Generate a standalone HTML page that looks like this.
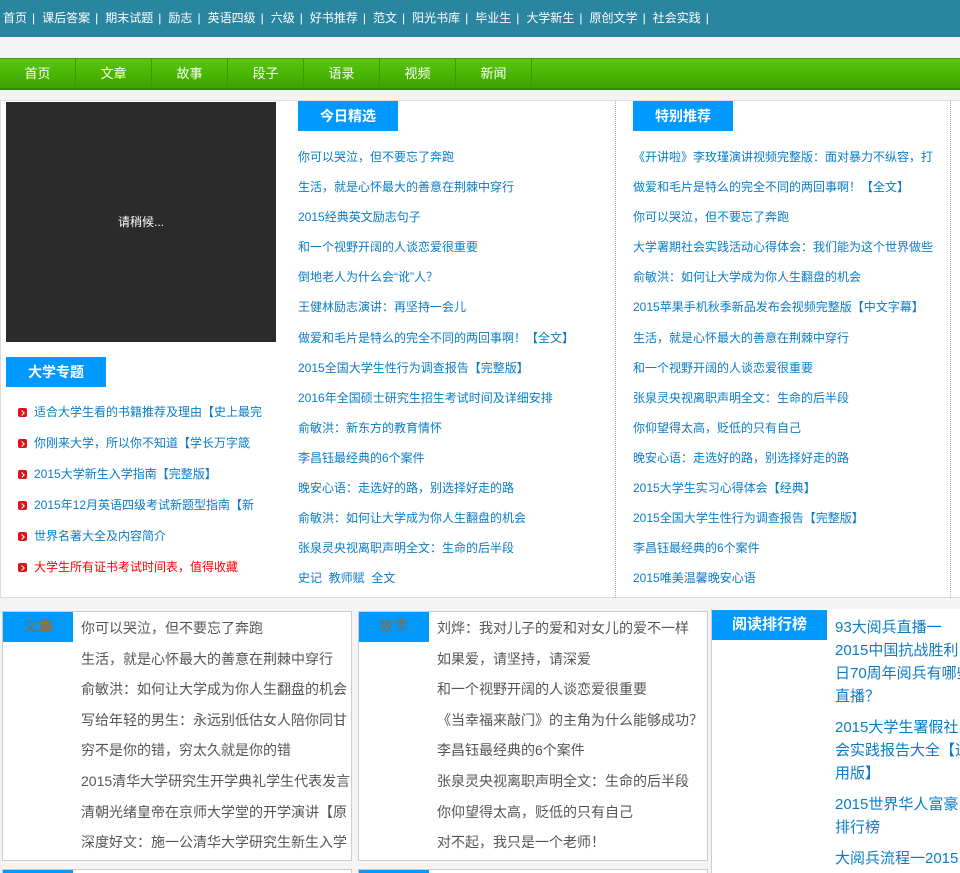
<!DOCTYPE html>
<html><head><meta charset="utf-8"><style>
*{margin:0;padding:0;box-sizing:border-box}
body{width:960px;height:873px;overflow:hidden;background:#f4f4f4;font-family:"Liberation Sans","Noto Sans CJK SC",sans-serif;position:relative}
.top{position:absolute;left:0;top:0;width:960px;height:37px;background:#2a85a0;color:#fff;font-size:12px;line-height:36px;padding-left:3px;white-space:nowrap}
.top i{font-style:normal;display:inline-block;margin:0 7px 0 5px}
.nav{position:absolute;left:0;top:58px;width:960px;height:32px;background:linear-gradient(#5cc615,#46b300 60%,#3da000);border-top:1px solid #3a9a10;border-bottom:2px solid #2f8a05}
.nav span{position:absolute;top:0;width:76px;text-align:center;color:#fff;font-size:13px;line-height:30px;border-right:1px solid #3a9a00}
.abs{position:absolute}
.main{position:absolute;left:0;top:100px;width:960px;height:498px;background:#fff;border:1px solid #ddd;border-right:none}
.dark{position:absolute;left:6px;top:102px;width:270px;height:240px;background:#2b2b2b;color:#fff;font-size:12px;text-align:center;line-height:240px}
.hd{position:absolute;background:#0099ff;color:#fff;font-weight:bold;font-size:14px;text-align:center;line-height:30px;height:30px}
.lst{position:absolute;font-size:12px;color:#0a7cc6;white-space:nowrap;overflow:hidden}
.lst div{height:30.1px;line-height:30px}
.lft div{height:31px;line-height:31px;padding-left:28px;position:relative}
.lft div:before{content:"";position:absolute;left:12px;top:11px;width:9px;height:9px;background:#d9141b;border-radius:2px}
.lft div:after{content:"";position:absolute;left:14px;top:14px;width:3px;height:3px;border:solid #fff;border-width:1px 1px 0 0;transform:rotate(45deg)}
.dot{position:absolute;top:101px;height:497px;border-left:1px dotted #aaa}
.box{position:absolute;top:611px;height:250px;background:#fff;border:1px solid #ccc}
.bh{position:absolute;left:0;top:0;width:70px;height:30px;background:#0099ff;color:#8b6b3d;font-size:15px;text-align:center;line-height:30px}
.bl{position:absolute;left:78px;top:1px;font-size:14px;color:#555;white-space:nowrap;overflow:hidden}
.bl div{height:30.6px;line-height:30px}
</style></head><body>
<div class="top">首页<i>|</i>课后答案<i>|</i>期末试题<i>|</i>励志<i>|</i>英语四级<i>|</i>六级<i>|</i>好书推荐<i>|</i>范文<i>|</i>阳光书库<i>|</i>毕业生<i>|</i>大学新生<i>|</i>原创文学<i>|</i>社会实践<i>|</i></div>
<div class="nav"><span style="left:0">首页</span><span style="left:76px">文章</span><span style="left:152px">故事</span><span style="left:228px">段子</span><span style="left:304px">语录</span><span style="left:380px">视频</span><span style="left:456px">新闻</span></div>
<div class="main"></div>
<div class="dark">请稍候...</div>
<div class="hd" style="left:6px;top:357px;width:100px">大学专题</div>
<div class="lst lft" style="left:6px;top:397px;width:262px">
<div>适合大学生看的书籍推荐及理由【史上最完</div><div>你刚来大学，所以你不知道【学长万字箴</div><div>2015大学新生入学指南【完整版】</div><div>2015年12月英语四级考试新题型指南【新</div><div>世界名著大全及内容简介</div><div style="color:#f00">大学生所有证书考试时间表，值得收藏</div></div>
<div class="hd" style="left:298px;top:101px;width:100px">今日精选</div>
<div class="lst" style="left:298px;top:142px;width:310px">
<div>你可以哭泣，但不要忘了奔跑</div><div>生活，就是心怀最大的善意在荆棘中穿行</div><div>2015经典英文励志句子</div><div>和一个视野开阔的人谈恋爱很重要</div><div>倒地老人为什么会“讹”人？</div><div>王健林励志演讲：再坚持一会儿</div><div>做爱和毛片是特么的完全不同的两回事啊！【全文】</div><div>2015全国大学生性行为调查报告【完整版】</div><div>2016年全国硕士研究生招生考试时间及详细安排</div><div>俞敏洪：新东方的教育情怀</div><div>李昌钰最经典的6个案件</div><div>晚安心语：走选好的路，别选择好走的路</div><div>俞敏洪：如何让大学成为你人生翻盘的机会</div><div>张泉灵央视离职声明全文：生命的后半段</div><div>史记&nbsp; 教师赋&nbsp; 全文</div></div>
<div class="dot" style="left:615px"></div><div class="dot" style="left:950px"></div>
<div class="hd" style="left:633px;top:101px;width:100px">特别推荐</div>
<div class="lst" style="left:633px;top:142px;width:302px">
<div>《开讲啦》李玫瑾演讲视频完整版：面对暴力不纵容，打</div><div>做爱和毛片是特么的完全不同的两回事啊！【全文】</div><div>你可以哭泣，但不要忘了奔跑</div><div>大学署期社会实践活动心得体会：我们能为这个世界做些</div><div>俞敏洪：如何让大学成为你人生翻盘的机会</div><div>2015苹果手机秋季新品发布会视频完整版【中文字幕】</div><div>生活，就是心怀最大的善意在荆棘中穿行</div><div>和一个视野开阔的人谈恋爱很重要</div><div>张泉灵央视离职声明全文：生命的后半段</div><div>你仰望得太高，贬低的只有自己</div><div>晚安心语：走选好的路，别选择好走的路</div><div>2015大学生实习心得体会【经典】</div><div>2015全国大学生性行为调查报告【完整版】</div><div>李昌钰最经典的6个案件</div><div>2015唯美温馨晚安心语</div></div>
<div class="box" style="left:2px;width:350px"><div class="bh">文章</div><div class="bl" style="width:270px">
<div>你可以哭泣，但不要忘了奔跑</div><div>生活，就是心怀最大的善意在荆棘中穿行</div><div>俞敏洪：如何让大学成为你人生翻盘的机会</div><div>写给年轻的男生：永远别低估女人陪你同甘</div><div>穷不是你的错，穷太久就是你的错</div><div>2015清华大学研究生开学典礼学生代表发言</div><div>清朝光绪皇帝在京师大学堂的开学演讲【原</div><div>深度好文：施一公清华大学研究生新生入学</div></div></div>
<div class="box" style="left:358px;width:350px"><div class="bh">故事</div><div class="bl" style="width:270px">
<div>刘烨：我对儿子的爱和对女儿的爱不一样</div><div>如果爱，请坚持，请深爱</div><div>和一个视野开阔的人谈恋爱很重要</div><div>《当幸福来敲门》的主角为什么能够成功？</div><div>李昌钰最经典的6个案件</div><div>张泉灵央视离职声明全文：生命的后半段</div><div>你仰望得太高，贬低的只有自己</div><div>对不起，我只是一个老师！</div></div></div>
<div class="abs" style="left:711px;top:609px;width:249px;height:264px;background:#fff;border-left:1px solid #ccc"></div>
<div class="hd" style="left:712px;top:610px;width:115px;font-size:15px">阅读排行榜</div>
<div class="abs" style="left:835px;top:616px;width:125px;font-size:15px;line-height:23px;color:#0a7cc6;white-space:nowrap;overflow:hidden">
<div style="margin-bottom:8px">93大阅兵直播一<br>2015中国抗战胜利<br>日70周年阅兵有哪些<br>直播？</div><div style="margin-bottom:8px">2015大学生署假社<br>会实践报告大全【通<br>用版】</div><div style="margin-bottom:8px">2015世界华人富豪<br>排行榜</div><div>大阅兵流程一2015</div></div>
<div class="abs" style="left:2px;top:869px;width:350px;height:4px;background:#fff;border:1px solid #ccc;border-bottom:none"><div style="width:70px;height:3px;background:#0099ff"></div></div>
<div class="abs" style="left:358px;top:869px;width:350px;height:4px;background:#fff;border:1px solid #ccc;border-bottom:none"><div style="width:70px;height:3px;background:#0099ff"></div></div>
</body></html>
